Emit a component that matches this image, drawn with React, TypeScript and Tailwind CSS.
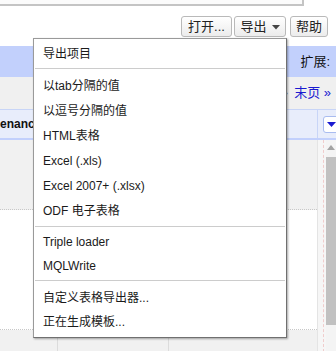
import React from "react"

const font = { fontFamily: '"Liberation Sans", "Noto Sans CJK SC", sans-serif' }

function ToolButton({ label, width, caret }: { label: string; width: string; caret?: boolean }) {
  return (
    <div
      className={`${width} h-[21px] flex items-center justify-center gap-[5px] rounded-[3px] border border-[#b9b9b9] bg-gradient-to-b from-white to-[#ececec] text-[13px] text-[#222] leading-none`}
    >
      <span>{label}</span>
      {caret && (
        <svg width="8" height="5" viewBox="0 0 8 5" className="mt-[1px]">
          <path d="M0 0H8L4 4.5Z" fill="#444" />
        </svg>
      )}
    </div>
  )
}

const Item = ({ label, h = "h-[25px]" }: { label: string; h?: string }) => (
  <div className={`${h} flex items-center pl-[9px] text-[12px] text-[#1a1a1a] whitespace-nowrap`}>
    {label}
  </div>
)

export default function App() {
  return (
    <div className="relative w-[336px] h-[351px] overflow-hidden bg-white" style={font}>
      {/* top strip */}
      <div className="h-[6px] w-[304px] bg-[#fbfbfb] border-b-2 border-r-2 border-[#c4c4c4]" />

      {/* toolbar */}
      <div className="h-[40px] flex justify-end items-start pt-[10px] pr-[8px]">
        <ToolButton label="打开..." width="w-[51px]" />
        <div className="w-[2px]" />
        <ToolButton label="导出" width="w-[52px]" caret />
        <div className="w-[4px]" />
        <ToolButton label="帮助" width="w-[38px]" />
      </div>

      {/* blue band */}
      <div className="h-[31px] bg-[#c2d0fc] flex items-center justify-end pr-[6px] text-[13px] text-[#111]">
        扩展:
      </div>

      {/* pager row */}
      <div className="h-[32px] bg-[#f0f0f0] flex items-center justify-end pr-[5px] gap-[6px] text-[13px] text-[#1a1ad0]">
        <span className="text-[#888]">›</span>
        <span>末页 »</span>
      </div>

      {/* column header row */}
      <div className="h-[31px] bg-[#e8edfb] border-t border-[#c8d5f7] border-b-2 border-b-[#c2d0fc] flex items-center">
        <div className="flex-1 text-[12px] font-bold text-[#111]">enanc</div>
        <div className="w-[6px] self-stretch border-l border-[#c8d5f7]" />
        <div className="w-[16px] h-[17px] mr-[-3px] rounded-[3px] border border-[#a9bcf0] bg-white flex items-center justify-center">
          <svg width="9" height="5" viewBox="0 0 9 5">
            <path d="M0 0H9L4.5 5Z" fill="#1a1ad0" />
          </svg>
        </div>
      </div>

      {/* body */}
      <div className="flex h-[212px]">
        <div className="flex-1 flex flex-col">
          <div className="h-[70px] bg-[#f1f1f1] border-b border-dotted border-[#c8c8c8]" />
          <div className="h-[120px] bg-white border-b border-dotted border-[#c8c8c8]" />
          <div className="flex-1 bg-[#f1f1f1] flex">
            <div className="w-[58px] border-r border-[#dcdcdc]" />
            <div className="w-[111px] border-r border-[#dcdcdc]" />
          </div>
        </div>
        <div className="w-[9px] flex border-l border-[#e4e4e4] bg-[#f6f6f6]">
          <div className="ml-[5px] border-l border-dashed border-[#f0cccc]" />
        </div>
        <div className="w-[10px] bg-[#f4f4f4] flex flex-col items-center">
          <svg width="8" height="5" viewBox="0 0 8 5" className="mt-[5px]">
            <path d="M0 5H8L4 0Z" fill="#a3a3a3" />
          </svg>
          <div className="mt-[7px] w-full h-[168px] bg-[#c1c1c1]" />
        </div>
      </div>

      {/* export menu */}
      <div className="absolute left-[33px] top-[38px] w-[254px] bg-white border border-[#9a9a9a] border-r-[#707070] border-b-[#707070] shadow-[1px_1px_2px_rgba(0,0,0,0.35)] pt-[2px] pb-[3px]">
        <Item label="导出项目" />
        <div className="mt-[2px] mb-[4px] mx-[1px] border-t border-[#cccccc]" />
        <Item label="以tab分隔的值" />
        <Item label="以逗号分隔的值" />
        <Item label="HTML表格" />
        <Item label="Excel (.xls)" />
        <Item label="Excel 2007+ (.xlsx)" />
        <Item label="ODF 电子表格" />
        <div className="mt-[3px] mb-[3px] mx-[1px] border-t border-[#cccccc]" />
        <Item label="Triple loader" h="h-[24px]" />
        <Item label="MQLWrite" h="h-[24px]" />
        <div className="mt-[2px] mb-[5px] mx-[1px] border-t border-[#cccccc]" />
        <Item label="自定义表格导出器..." h="h-[24px]" />
        <Item label="正在生成模板..." h="h-[24px]" />
      </div>
    </div>
  )
}
